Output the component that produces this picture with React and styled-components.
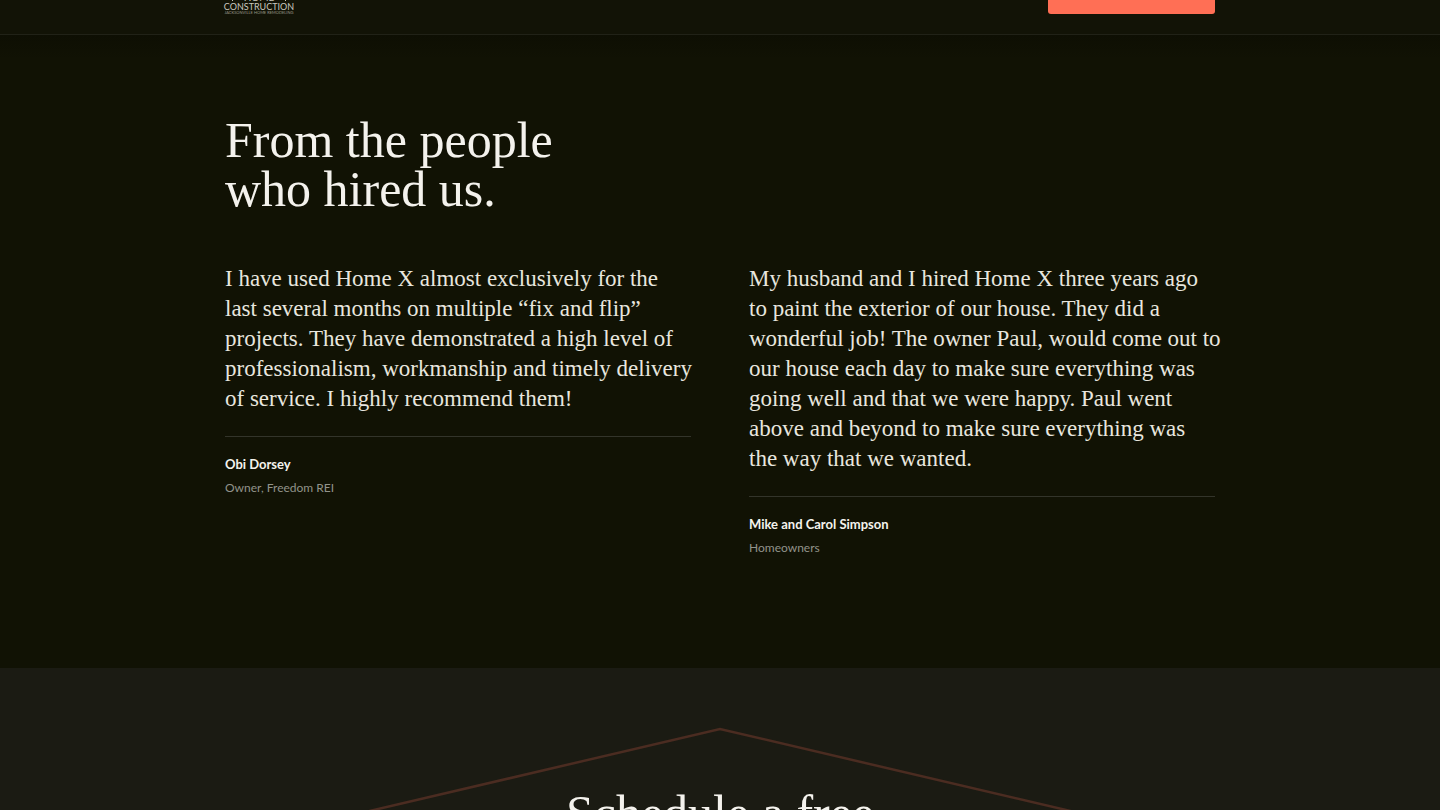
import React from "react";
import styled, { createGlobalStyle } from "styled-components";

const serif = `"Liberation Serif", "Times New Roman", serif`;
const sans = `Lato, "Open Sans", sans-serif`;

const GlobalStyle = createGlobalStyle`
  *, *::before, *::after { box-sizing: border-box; }
  body {
    margin: 0;
    background: #111204;
    color: #f4f2ed;
    font-family: ${sans};
  }
  h2, p, blockquote, figure { margin: 0; }
`;

const Page = styled.div`
  display: flex;
  flex-direction: column;
  height: 100vh;
  overflow: hidden;
`;

const Container = styled.div`
  width: 100%;
  max-width: 1038px;
  margin: 0 auto;
  padding: 0 24px;
`;

const Header = styled.header`
  position: relative;
  flex: none;
  height: 35px;
  overflow: hidden;
  background: #121306;
  border-bottom: 1px solid #212217;
`;

const HeaderRow = styled(Container)`
  display: flex;
  align-items: flex-end;
  justify-content: space-between;
  height: 34px;
  padding-bottom: 20px;
`;

const LogoLink = styled.a`
  display: block;
  color: #c9c8bf;

  svg { display: block; overflow: visible; }
`;

const CallButton = styled.button`
  width: 167px;
  height: 48px;
  border: 0;
  border-radius: 3px;
  background: #ff6f55;
`;

const Testimonials = styled.section`
  flex: none;
  padding: 81px 0 108px;
  background: linear-gradient(#0e0f03, #111204 24px);
`;

const Heading = styled.h2`
  font: 400 50px/49px ${serif};
`;

const Quotes = styled.div`
  display: grid;
  grid-template-columns: repeat(2, minmax(0, 1fr));
  align-items: start;
  gap: 58px;
  margin-top: 50px;
`;

const Quote = styled.blockquote`
  padding-bottom: 22px;
  border-bottom: 1px solid #33342a;
  color: #e8e6df;
  font: 400 23px/30px ${serif};
`;

const Line = styled.span`
  display: block;
  white-space: nowrap;
`;

const Caption = styled.figcaption`
  padding-top: 15px;
  line-height: 24px;
`;

const Name = styled.p`
  color: #f4f2ed;
  font-size: 13px;
  font-weight: 700;
`;

const Role = styled.p`
  color: #92928a;
  font-size: 12px;
`;

const Schedule = styled.section`
  position: relative;
  flex: 1;
  min-height: 0;
  overflow: hidden;
  padding-top: 121px;
  background: #1b1b13;
  text-align: center;
`;

const Roof = styled.svg`
  position: absolute;
  top: 58px;
  left: 50%;
  width: 800px;
  height: 100px;
  transform: translateX(-50%);
`;

const quotes = [
  {
    lines: [
      "I have used Home X almost exclusively for the",
      "last several months on multiple “fix and flip”",
      "projects. They have demonstrated a high level of",
      "professionalism, workmanship and timely delivery",
      "of service. I highly recommend them!",
    ],
    name: "Obi Dorsey",
    role: "Owner, Freedom REI",
  },
  {
    lines: [
      "My husband and I hired Home X three years ago",
      "to paint the exterior of our house. They did a",
      "wonderful job! The owner Paul, would come out to",
      "our house each day to make sure everything was",
      "going well and that we were happy. Paul went",
      "above and beyond to make sure everything was",
      "the way that we wanted.",
    ],
    name: "Mike and Carol Simpson",
    role: "Homeowners",
  },
];

function Logo() {
  return (
    <svg width="68" height="48" viewBox="0 0 68 48" fill="currentColor" aria-hidden="true">
      <path d="M7 35 34 8l27 27" fill="none" stroke="currentColor" />
      <text x="34" y="35" textAnchor="middle" fontFamily="Lato, sans-serif" fontSize="10">HOME</text>
      <text x="34" y="44" textAnchor="middle" fontFamily="Lato, sans-serif" fontSize="9">CONSTRUCTION</text>
      <text x="34" y="48" textAnchor="middle" fontFamily="Lato, sans-serif" fontSize="4" opacity="0.7">JACKSONVILLE HOME REMODELING</text>
    </svg>
  );
}

export default function App() {
  return (
    <Page>
      <GlobalStyle />
      <Header>
        <HeaderRow>
          <LogoLink href="#home" aria-label="Home X Construction"><Logo /></LogoLink>
          <CallButton type="button" aria-label="Schedule a free consultation" />
        </HeaderRow>
      </Header>
      <Testimonials>
        <Container>
          <Heading>From the people<br />who hired us.</Heading>
          <Quotes>
            {quotes.map((q) => (
              <figure key={q.name}>
                <Quote>{q.lines.map((l) => <Line key={l}>{l}</Line>)}</Quote>
                <Caption>
                  <Name>{q.name}</Name>
                  <Role>{q.role}</Role>
                </Caption>
              </figure>
            ))}
          </Quotes>
        </Container>
      </Testimonials>
      <Schedule>
        <Roof viewBox="0 0 800 100" fill="none" aria-hidden="true">
          <path d="M0 96.6 400 3 800 96.6" stroke="#4b2c21" strokeWidth="2.5" />
        </Roof>
        <Heading>Schedule a free</Heading>
      </Schedule>
    </Page>
  );
}
